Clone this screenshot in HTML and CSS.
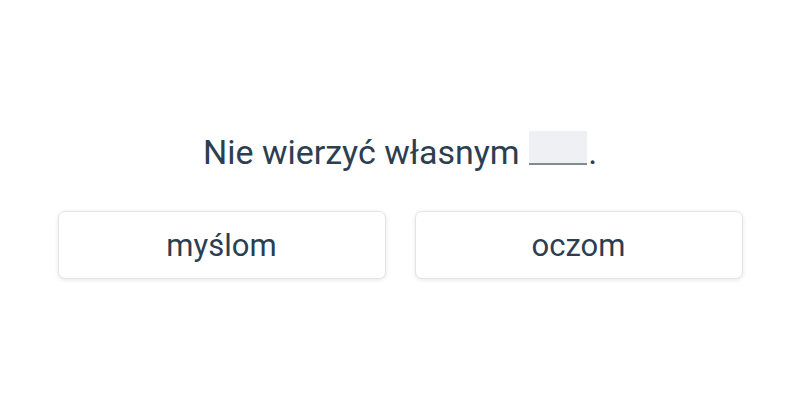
FILE: index.html
```html
<!DOCTYPE html>
<html lang="pl">
<head>
<meta charset="utf-8">
<link rel="stylesheet" href="styles.css">
</head>
<body>
<main class="quiz">
  <p class="sentence">Nie wierzyć własnym <span class="blank"></span>.</p>
  <div class="options">
    <button class="option">myślom</button>
    <button class="option">oczom</button>
  </div>
</main>
</body>
</html>
```
FILE: styles.css
```css
html, body {
  margin: 0;
  padding: 0;
  background: #ffffff;
}
body {
  width: 800px;
  height: 400px;
  font-family: Roboto, "Liberation Sans", sans-serif;
  color: #2c3e50;
}
.quiz {
  display: flex;
  flex-direction: column;
  align-items: center;
  padding-top: 128px;
}
.sentence {
  margin: 0;
  font-size: 34px;
  line-height: 48px;
}
.blank {
  display: inline-block;
  width: 58px;
  height: 32px;
  background: #eef0f3;
  border-bottom: 2px solid #7f8c8d;
  vertical-align: -1px;
  margin-left: 1px;
  margin-right: 1px;
}
.options {
  display: grid;
  grid-template-columns: 328px 328px;
  gap: 29px;
  margin-top: 35px;
}
.option {
  height: 68px;
  background: #ffffff;
  border: 1px solid #e1e4e8;
  border-radius: 7px;
  box-shadow: 0 1px 4px rgba(0,0,0,0.1);
  font-family: Roboto, "Liberation Sans", sans-serif;
  font-size: 31px;
  color: #2c3e50;
  padding: 0;
}
```
